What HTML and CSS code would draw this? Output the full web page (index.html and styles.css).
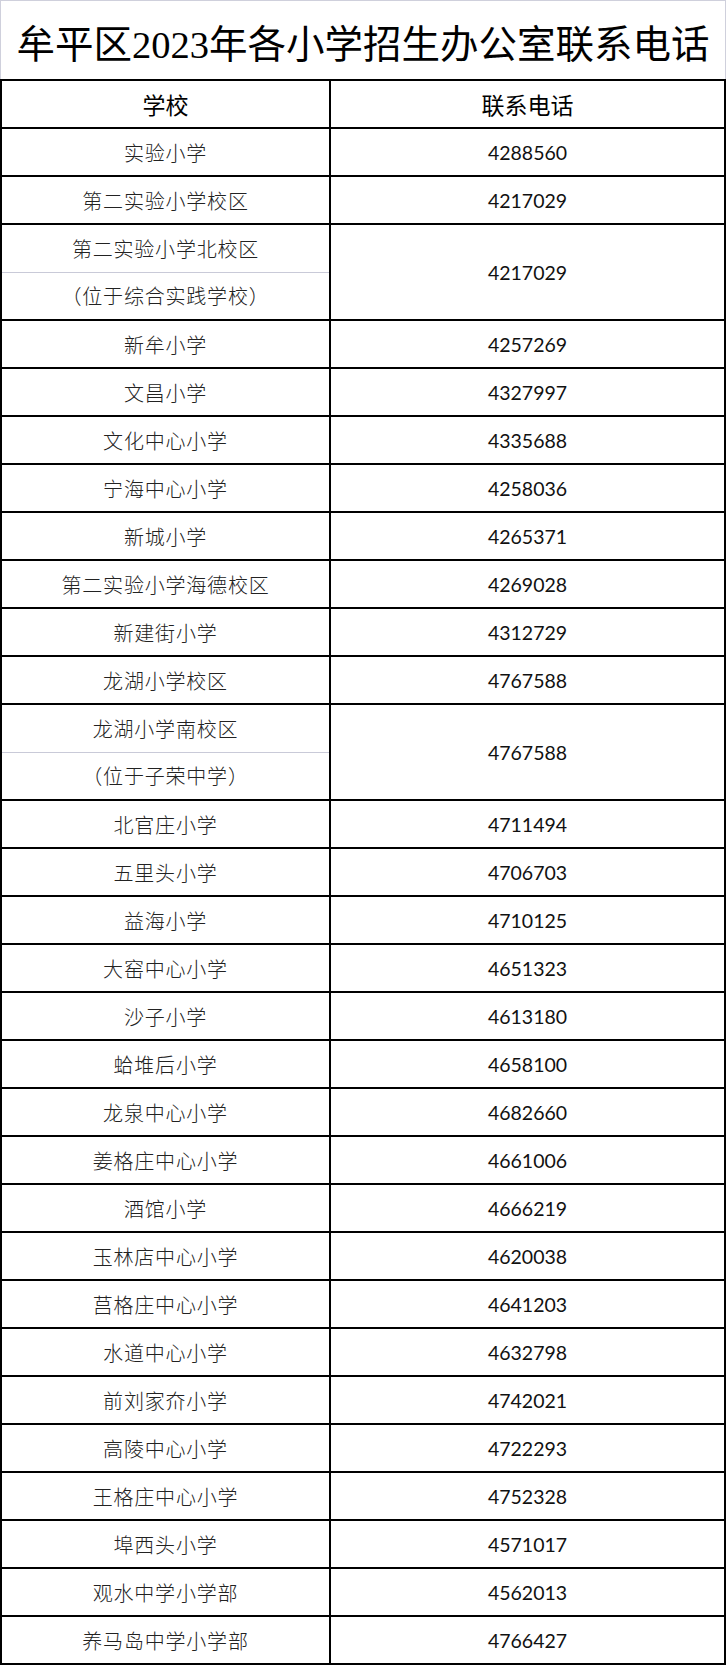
FILE: index.html
```html
<!DOCTYPE html>
<html lang="zh-CN">
<head>
<meta charset="utf-8">
<title>牟平区2023年各小学招生办公室联系电话</title>
<link rel="stylesheet" href="styles.css">
</head>
<body>
<div class="page">
  <div class="title">牟平区2023年各小学招生办公室联系电话</div>
  <div class="table">
    <div class="cell head">学校</div><div class="cell head">联系电话</div>
    <div class="cell name">实验小学</div><div class="cell num">4288560</div>
    <div class="cell name">第二实验小学校区</div><div class="cell num">4217029</div>
    <div class="cell name double"><span class="sub">第二实验小学北校区</span><span class="sub">（位于综合实践学校）</span></div><div class="cell num double">4217029</div>
    <div class="cell name">新牟小学</div><div class="cell num">4257269</div>
    <div class="cell name">文昌小学</div><div class="cell num">4327997</div>
    <div class="cell name">文化中心小学</div><div class="cell num">4335688</div>
    <div class="cell name">宁海中心小学</div><div class="cell num">4258036</div>
    <div class="cell name">新城小学</div><div class="cell num">4265371</div>
    <div class="cell name">第二实验小学海德校区</div><div class="cell num">4269028</div>
    <div class="cell name">新建街小学</div><div class="cell num">4312729</div>
    <div class="cell name">龙湖小学校区</div><div class="cell num">4767588</div>
    <div class="cell name double"><span class="sub">龙湖小学南校区</span><span class="sub">（位于子荣中学）</span></div><div class="cell num double">4767588</div>
    <div class="cell name">北官庄小学</div><div class="cell num">4711494</div>
    <div class="cell name">五里头小学</div><div class="cell num">4706703</div>
    <div class="cell name">益海小学</div><div class="cell num">4710125</div>
    <div class="cell name">大窑中心小学</div><div class="cell num">4651323</div>
    <div class="cell name">沙子小学</div><div class="cell num">4613180</div>
    <div class="cell name">蛤堆后小学</div><div class="cell num">4658100</div>
    <div class="cell name">龙泉中心小学</div><div class="cell num">4682660</div>
    <div class="cell name">姜格庄中心小学</div><div class="cell num">4661006</div>
    <div class="cell name">酒馆小学</div><div class="cell num">4666219</div>
    <div class="cell name">玉林店中心小学</div><div class="cell num">4620038</div>
    <div class="cell name">莒格庄中心小学</div><div class="cell num">4641203</div>
    <div class="cell name">水道中心小学</div><div class="cell num">4632798</div>
    <div class="cell name">前刘家夼小学</div><div class="cell num">4742021</div>
    <div class="cell name">高陵中心小学</div><div class="cell num">4722293</div>
    <div class="cell name">王格庄中心小学</div><div class="cell num">4752328</div>
    <div class="cell name">埠西头小学</div><div class="cell num">4571017</div>
    <div class="cell name">观水中学小学部</div><div class="cell num">4562013</div>
    <div class="cell name">养马岛中学小学部</div><div class="cell num">4766427</div>
  </div>
</div>
</body>
</html>
```

FILE: styles.css
```css
html, body {
  margin: 0;
  padding: 0;
  background: #ffffff;
}

.page {
  width: 726px;
}

.title {
  box-sizing: border-box;
  height: 79px;
  border: 1px solid #cfd0dc;
  border-bottom: none;
  display: flex;
  align-items: center;
  justify-content: center;
  font-family: "Liberation Serif", "Noto Sans CJK SC", serif;
  font-size: 38.5px;
  font-weight: 400;
  color: #000;
  white-space: nowrap;
  padding-top: 2px;
}

.table {
  display: grid;
  grid-template-columns: 327px 1fr;
  grid-auto-rows: 46px;
  gap: 2px;
  padding: 2px;
  background: #000;
}

.cell {
  background: #fff;
  display: flex;
  align-items: center;
  justify-content: center;
  color: #111;
}

.head {
  font-family: "Noto Sans CJK SC", sans-serif;
  font-size: 23px;
  font-weight: 400;
  color: #000;
}

.name {
  font-family: "Noto Sans CJK SC", sans-serif;
  font-size: 20px;
  letter-spacing: 0.8px;
  font-weight: 300;
  color: #222;
}

.num {
  font-family: Lato, "Liberation Sans", sans-serif;
  font-size: 19.5px;
  color: #111;
}

.double {
  grid-row: span 2;
}

.name.double {
  flex-direction: column;
  align-items: stretch;
}

.sub {
  flex: 1;
  display: flex;
  align-items: center;
  justify-content: center;
}

.sub + .sub {
  border-top: 1px solid #c9cad8;
}
```
